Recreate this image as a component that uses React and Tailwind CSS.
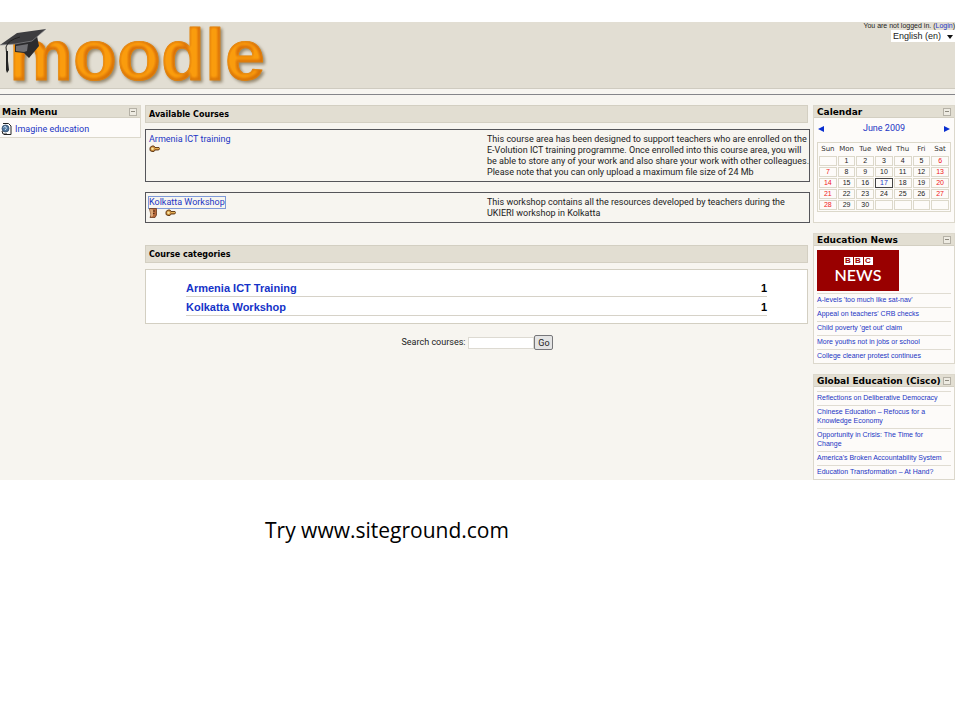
import React, { useState } from "react";

const courses = [
    {
        name: "Armenia ICT training",
        guest: false,
        summary: [
            "This course area has been designed to support teachers who are enrolled on the",
            "E-Volution ICT training programme. Once enrolled into this course area, you will",
            "be able to store any of your work and also share your work with other colleagues.",
            "Please note that you can only upload a maximum file size of 24 Mb",
        ],
    },
    {
        name: "Kolkatta Workshop",
        guest: true,
        summary: [
            "This workshop contains all the resources developed by teachers during the",
            "UKIERI workshop in Kolkatta",
        ],
    },
];

const categories = [
    { name: "Armenia ICT Training", count: 1 },
    { name: "Kolkatta Workshop", count: 1 },
];

const educationNews = [
    "A-levels 'too much like sat-nav'",
    "Appeal on teachers' CRB checks",
    "Child poverty 'get out' claim",
    "More youths not in jobs or school",
    "College cleaner protest continues",
];

const ciscoNews = [
    "Reflections on Deliberative Democracy",
    "Chinese Education – Refocus for a Knowledge Economy",
    "Opportunity in Crisis: The Time for Change",
    "America's Broken Accountability System",
    "Education Transformation – At Hand?",
];

const weekdays = ["Sun", "Mon", "Tue", "Wed", "Thu", "Fri", "Sat"];
const weeks = [
    ["", 1, 2, 3, 4, 5, 6],
    [7, 8, 9, 10, 11, 12, 13],
    [14, 15, 16, 17, 18, 19, 20],
    [21, 22, 23, 24, 25, 26, 27],
    [28, 29, 30, "", "", "", ""],
];

function Logo() {
    return (
        <svg
            width="272"
            height="66"
            viewBox="0 0 272 66"
            className="block overflow-visible"
            role="img"
            aria-label="moodle"
        >
            <defs>
                <linearGradient id="orange" x1="0" y1="0" x2="0" y2="1">
                    <stop offset="0" stopColor="#d9660a" />
                    <stop offset="1" stopColor="#d97806" />
                </linearGradient>
                <filter
                    id="bevel"
                    x="-5%"
                    y="-10%"
                    width="112%"
                    height="130%"
                    colorInterpolationFilters="sRGB"
                >
                    <feMorphology in="SourceAlpha" operator="erode" radius="2" result="core" />
                    <feGaussianBlur in="core" stdDeviation="1.6" result="glow" />
                    <feOffset in="glow" dx="-1" dy="-1" result="glowUp" />
                    <feColorMatrix
                        in="glowUp"
                        type="matrix"
                        values="0 0 0 0 0.98 0 0 0 0 0.61 0 0 0 0 0.05 0 0 0 1.2 0"
                        result="amber"
                    />
                    <feComposite in="amber" in2="SourceAlpha" operator="in" result="light" />
                    <feOffset in="SourceAlpha" dx="2" dy="2" result="o" />
                    <feGaussianBlur in="o" stdDeviation="1.5" result="sh" />
                    <feColorMatrix
                        in="sh"
                        type="matrix"
                        values="0 0 0 0 0.4 0 0 0 0 0.33 0 0 0 0 0.2 0 0 0 0.6 0"
                        result="shadow"
                    />
                    <feMerge>
                        <feMergeNode in="shadow" />
                        <feMergeNode in="SourceGraphic" />
                        <feMergeNode in="light" />
                    </feMerge>
                </filter>
            </defs>
            <text
                x="9"
                y="58"
                fontFamily="'Liberation Sans', Arial, sans-serif"
                fontWeight="700"
                fontSize="72"
                fill="url(#orange)"
                stroke="#dd8010"
                strokeWidth="1"
                strokeLinejoin="round"
                filter="url(#bevel)"
            >
                moodle
            </text>
            <path d="M15 20 L32 16 L37 14 L39 24 L29 36 L24 31 L15 30 Z" fill="#2b2b2d" />
            <path d="M16 24 L28 22 L27 29 L24 30 L16 29 Z" fill="#6f6f73" />
            <path d="M0 23 L17 11 L46 7 L32 19 L15 22 Z" fill="#3d3d40" />
            <path d="M0 23 L15 22 L32 19 L46 7" fill="none" stroke="#8a8a8c" strokeWidth="0.7" />
            <path d="M20 15 Q8 18 6 25 L7 36" fill="none" stroke="#222" strokeWidth="1" />
            <path d="M6 29 L8 29 L8 39 L9 48 L7 51 L6 48 L6 40 Z" fill="#222" />
        </svg>
    );
}

function KeyIcon() {
    return (
        <svg width="11" height="8" viewBox="0 0 11 8" className="block">
            <path
                d="M3 1 h2 l1 1.5 h4 l.7 1 -1 1.5 H6 L5 6.500 H3 L1 5.500 V2.500 Z"
                fill="#c98b3c"
                stroke="#5b3410"
                strokeWidth="0.9"
            />
            <circle cx="3.500" cy="3.700" r="1.300" fill="#fbe6a0" />
            <path d="M6 3.500 H10" stroke="#f0c060" strokeWidth="0.7" />
        </svg>
    );
}

function GuestIcon() {
    return (
        <svg width="8" height="10" viewBox="0 0 8 10" className="block">
            <path d="M.5 .5 H7.500 V7 L6 9.500 H1 L2 7 Z" fill="#b5683a" stroke="#6b3a1c" strokeWidth="0.8" />
            <path d="M1 1 L4 1.500 V8 L2 9 Z" fill="#dba878" />
            <path d="M4 3 h2 M4 5.500 h1.500" stroke="#3e2210" strokeWidth="0.9" />
        </svg>
    );
}

function PageIcon() {
    return (
        <svg width="11" height="12" viewBox="0 0 11 12" className="block">
            <path d="M2 .5 H7.500 L10 3 V11.500 H3" fill="#fff" stroke="#222" strokeWidth="1" />
            <circle cx="4.500" cy="5.500" r="3.500" fill="#5278a0" stroke="#27425f" strokeWidth="0.7" />
            <path d="M2.500 4.500 Q4 2.500 5 4 T4 7" fill="none" stroke="#cfe0ee" strokeWidth="1" />
            <path d="M1 8 L2 11 L6 11" fill="none" stroke="#222" strokeWidth="1" />
        </svg>
    );
}

function Block({ title, children }) {
    const [open, setOpen] = useState(true);

    return (
        <section className="border border-[#dcd8cc] bg-[#fdfbf9]">
            <div className="flex h-3 items-center justify-between border-b border-[#d3cfc2] bg-[#e2ded2] px-[3px]">
                <h2 className="whitespace-nowrap font-['DejaVu_Sans',Verdana,sans-serif] text-[9px] font-bold leading-3 text-black">
                    {title}
                </h2>
                <button
                    type="button"
                    aria-label={`Toggle ${title}`}
                    onClick={() => setOpen(!open)}
                    className="flex size-2 items-center justify-center border border-[#b5b1a6] bg-[#eeebe2]"
                >
                    <span className="h-px w-1 bg-[#8d897e]" />
                </button>
            </div>
            {open && children}
        </section>
    );
}

function Heading({ children }) {
    return (
        <h2 className="mr-[2px] border border-[#d3cfc2] bg-[#e2ded2] px-[3px] pt-[2px] font-['DejaVu_Sans',Verdana,sans-serif] text-[8px] font-bold leading-[14px] text-black">
            {children}
        </h2>
    );
}

function NewsList({ items }) {
    return (
        <ul className="px-[3px] font-['Liberation_Sans',Arial,sans-serif] text-[7px] leading-[9px]">
            {items.map((item) => (
                <li key={item} className="border-t border-[#e0dcd2] pt-px pr-2 pb-[3px]">
                    <a href="#" className="block text-[#1c35c4]">
                        {item}
                    </a>
                </li>
            ))}
        </ul>
    );
}

function BbcLogo() {
    return (
        <a
            href="#"
            className="mx-[3px] mt-1 mb-[2px] flex h-[41px] w-[82px] flex-col items-center justify-center bg-[#990000] font-['Liberation_Sans',Arial,sans-serif] text-white"
        >
            <span className="flex gap-px">
                {["B", "B", "C"].map((letter, i) => (
                    <span
                        key={i}
                        className="flex h-2 w-[9px] items-center justify-center bg-white text-[8px] font-bold leading-2 text-[#990000]"
                    >
                        {letter}
                    </span>
                ))}
            </span>
            <span className="font-[Lato,sans-serif] text-[16px] font-semibold leading-5">
                NEWS
            </span>
        </a>
    );
}

function Calendar() {
    const dayColor = (day, index) => {
        if (day === 17) return "text-[#1c35c4] border-[#444444]";
        if (index === 0 || index === 6) return "text-[#f02020] border-[#dcd8ca]";
        return "text-[#222222] border-[#dcd8ca]";
    };

    return (
        <div className="px-[3px] pb-[10px]">
            <div className="flex h-[22px] items-center justify-between px-px text-[9px] text-[#1c35c4]">
                <button type="button" aria-label="Previous month">
                    <svg width="6" height="6" viewBox="0 0 6 6">
                        <path d="M6 0 V6 L0 3 Z" fill="#0a2fd0" />
                    </svg>
                </button>
                <a href="#">June 2009</a>
                <button type="button" aria-label="Next month">
                    <svg width="6" height="6" viewBox="0 0 6 6">
                        <path d="M0 0 V6 L6 3 Z" fill="#0a2fd0" />
                    </svg>
                </button>
            </div>
            <table className="mt-[2px] w-full table-fixed border-separate border-spacing-px border border-[#dcd8ca] text-center font-['Liberation_Sans',Arial,sans-serif]">
                <thead>
                    <tr>
                        {weekdays.map((day) => (
                            <th
                                key={day}
                                className="h-[11px] p-0 font-['DejaVu_Sans',Verdana,sans-serif] text-[7px] font-normal leading-[11px] text-[#333333]"
                            >
                                {day}
                            </th>
                        ))}
                    </tr>
                </thead>
                <tbody>
                    {weeks.map((week, row) => (
                        <tr key={row}>
                            {week.map((day, index) => (
                                <td
                                    key={index}
                                    className={`h-[10px] border p-0 text-[7px] leading-2 ${dayColor(day, index)}`}
                                >
                                    {day}
                                </td>
                            ))}
                        </tr>
                    ))}
                </tbody>
            </table>
        </div>
    );
}

function Header() {
    return (
        <header className="border-b border-[#85858a] pb-[5px] font-['Liberation_Sans',Arial,sans-serif]">
            <div className="flex h-[67px] items-start justify-between border-b border-[#cfcbc0] bg-[#e2ded3]">
                <Logo />
                <div className="flex flex-col items-end">
                    <p className="whitespace-nowrap text-[7px] leading-2 text-[#222222]">
                        You are not logged in. (
                        <a href="#" className="text-[#1c35c4]">
                            Login
                        </a>
                        )
                    </p>
                    <div className="relative">
                        <select
                            aria-label="Language"
                            className="block h-3 w-16 appearance-none bg-white pr-[10px] pl-[2px] text-[9px] leading-3 text-[#222222]"
                        >
                            <option>English (en)</option>
                        </select>
                        <svg
                            width="6"
                            height="4"
                            viewBox="0 0 6 4"
                            className="pointer-events-none absolute right-[2px] top-[5px]"
                        >
                            <path d="M0 0 H6 L3 4 Z" fill="#111111" />
                        </svg>
                    </div>
                </div>
            </div>
        </header>
    );
}

export default function App() {
    return (
        <div className="bg-white pt-[22px] font-[Roboto,Arial,sans-serif]">
            <div className="mr-[5px] bg-[#f7f5f0]">
                <Header />
                <div className="flex items-start pt-[10px]">
                    <aside className="-ml-[2px] w-[143px] shrink-0">
                        <Block title="Main Menu">
                            <div className="flex items-center gap-[3px] px-[2px] pt-[5px] pb-[2px]">
                                <PageIcon />
                                <a href="#" className="text-[9px] leading-3 text-[#1c35c4]">
                                    Imagine education
                                </a>
                            </div>
                        </Block>
                    </aside>

                    <main className="ml-1 min-w-0 flex-1">
                        <Heading>Available Courses</Heading>
                        <div className="mt-[6px] flex flex-col gap-[10px]">
                            {courses.map((course) => (
                                <article
                                    key={course.name}
                                    className="flex border border-[#55555a] px-[3px] pt-1 pb-[3px] text-[9px] leading-[11px]"
                                >
                                    <div className="flex-1">
                                        <a
                                            href="#"
                                            className={
                                                course.guest
                                                    ? "inline-block text-[#1c35c4] outline outline-[#7f9ad8]"
                                                    : "inline-block text-[#1c35c4]"
                                            }
                                        >
                                            {course.name}
                                        </a>
                                        <div className="flex items-center gap-2">
                                            {course.guest && <GuestIcon />}
                                            <KeyIcon />
                                        </div>
                                    </div>
                                    <p className="w-[319px] whitespace-nowrap text-[#222222]">
                                        {course.summary.map((line) => (
                                            <span key={line} className="block">
                                                {line}
                                            </span>
                                        ))}
                                    </p>
                                </article>
                            ))}
                        </div>

                        <div className="mt-[22px]">
                            <Heading>Course categories</Heading>
                        </div>
                        <ul className="mt-[6px] mr-[2px] border border-[#d3cfc2] bg-white px-10 pt-[11px] pb-[7px] font-['Liberation_Sans',Arial,sans-serif] text-[11px] font-bold">
                            {categories.map((category) => (
                                <li
                                    key={category.name}
                                    className="mb-[3px] flex justify-between border-b border-[#d6d2c8] leading-[15px] last:mb-0"
                                >
                                    <a href="#" className="text-[#1533c8]">
                                        {category.name}
                                    </a>
                                    <span className="text-black">{category.count}</span>
                                </li>
                            ))}
                        </ul>

                        <form
                            onSubmit={(e) => e.preventDefault()}
                            className="mt-[11px] flex items-center justify-center text-[9px] text-[#222222]"
                        >
                            <label htmlFor="search" className="mr-[3px]">
                                Search courses:
                            </label>
                            <input
                                id="search"
                                type="text"
                                className="h-3 w-[66px] border border-[#dddad2] bg-white px-px"
                            />
                            <button
                                type="submit"
                                className="h-[15px] w-[19px] rounded-xs border border-[#77777a] bg-[#e4e4e4] text-[9px] leading-3"
                            >
                                Go
                            </button>
                        </form>
                    </main>

                    <aside className="ml-[3px] flex w-[142px] shrink-0 flex-col gap-[10px]">
                        <Block title="Calendar">
                            <Calendar />
                        </Block>
                        <Block title="Education News">
                            <BbcLogo />
                            <NewsList items={educationNews} />
                        </Block>
                        <Block title="Global Education (Cisco)">
                            <div className="pt-1">
                                <NewsList items={ciscoNews} />
                            </div>
                        </Block>
                    </aside>
                </div>
            </div>
            <p className="px-[265px] pt-9 pb-10 font-['Open_Sans',sans-serif] text-[21px] leading-7 text-black">
                Try www.siteground.com
            </p>
        </div>
    );
}
